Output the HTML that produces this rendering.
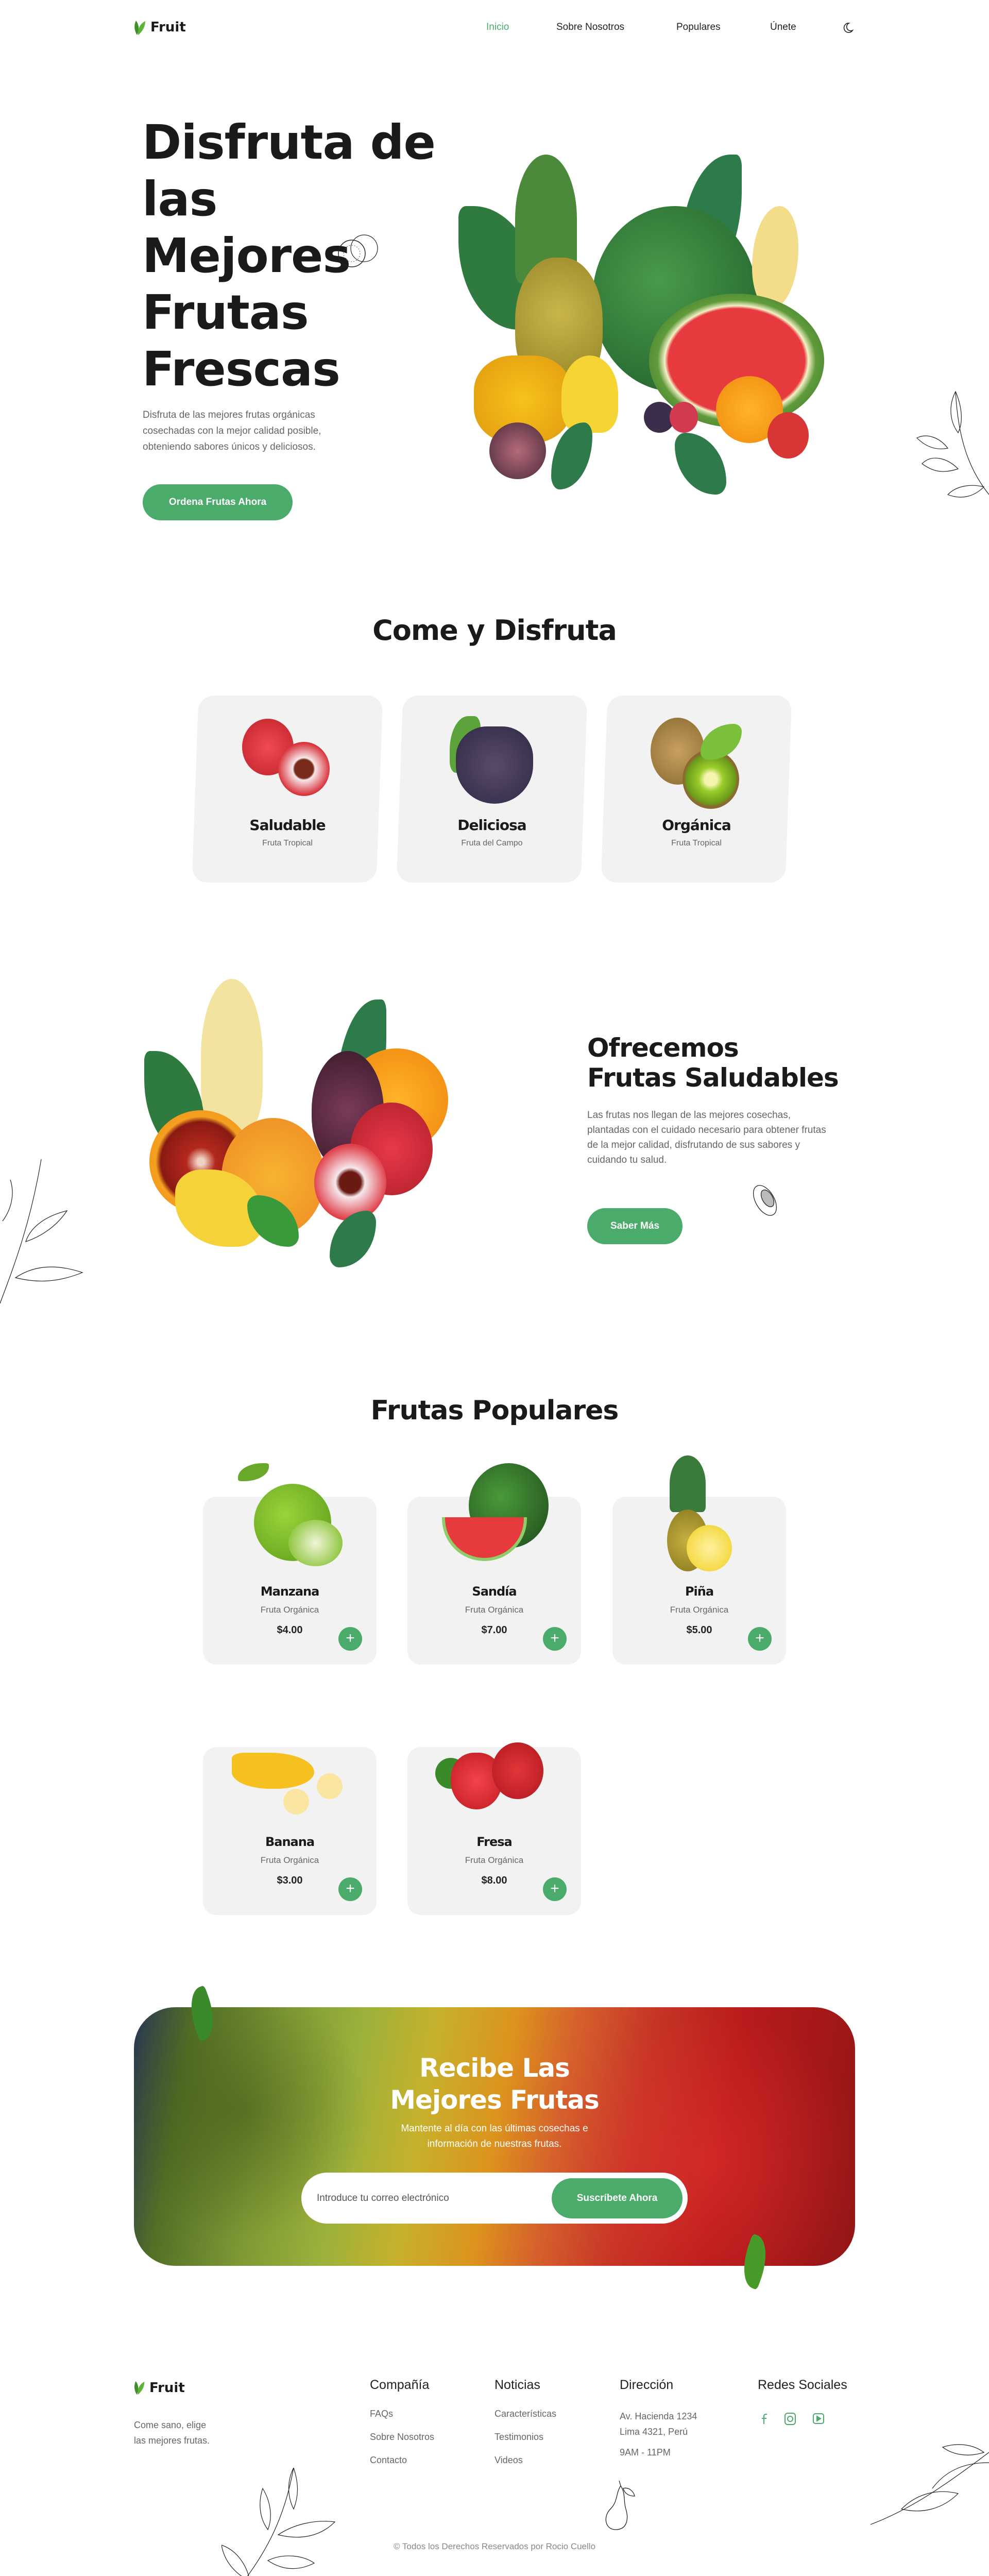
<!DOCTYPE html>
<html style="width:1920px;height:5017px;overflow:hidden"><head><meta charset="utf-8">
<style>
*{margin:0;padding:0;box-sizing:border-box}
body{width:1920px;height:5017px;position:relative;background:#fff;font-family:"Liberation Sans",sans-serif;color:#1f1f1f;overflow:hidden}
.a{position:absolute}
.h{font-family:"DejaVu Sans","Liberation Sans",sans-serif;font-weight:bold;color:#1a1a1a;letter-spacing:-1px}
.nav a{position:absolute;top:42px;font-size:19px;color:#222;text-decoration:none}
.btn{position:absolute;background:#4aab6a;color:#fff;border-radius:40px;font-weight:bold;font-size:19px;display:flex;align-items:center;justify-content:center}
.blob{position:absolute;border-radius:50%}
.card{position:absolute;background:#f2f2f2;border-radius:30px}
.pc{position:absolute;background:#f2f2f2;border-radius:26px;width:337px;height:326px}
.pc .n{position:absolute;top:170px;width:100%;text-align:center;font-size:24px}
.pc .s{position:absolute;top:210px;width:100%;text-align:center;font-size:17px;color:#666}
.pc .p{position:absolute;top:248px;width:100%;text-align:center;font-size:20px;font-weight:bold;color:#222}
.pc .plus{position:absolute;left:263px;top:253px;width:46px;height:46px;border-radius:50%;background:#4aab6a;color:#fff;font-size:30px;line-height:44px;text-align:center}
.ft{position:absolute;font-size:18px;color:#666}
.fh{position:absolute;font-size:25px;color:#222;top:4615px}
</style></head><body>

<!-- NAV -->
<svg class="a" style="left:258px;top:38px" width="30" height="32" viewBox="0 0 30 32"><path d="M8 30 C2 20 2 10 6 2 C12 10 13 20 8 30Z" fill="#3f8f2a"/><path d="M10 30 C18 24 24 14 24 3 C14 8 9 18 10 30Z" fill="#5cb535"/></svg>
<div class="a h" style="left:292px;top:38px;font-size:26px;letter-spacing:0">Fruit</div>
<div class="nav">
<a style="left:944px;color:#4aab6a">Inicio</a>
<a style="left:1080px">Sobre Nosotros</a>
<a style="left:1313px">Populares</a>
<a style="left:1495px">Únete</a>
</div>
<svg class="a" style="left:1636px;top:42px" width="22" height="24" viewBox="0 0 22 24"><path d="M12 3 A9 9 0 1 0 19 17 A7 7 0 1 1 12 3Z" fill="none" stroke="#222" stroke-width="1.6"/></svg>

<!-- HERO -->
<div class="a h" style="left:276px;top:222px;font-size:92px;line-height:110px;width:640px">Disfruta de<br>las<br>Mejores<br>Frutas<br>Frescas</div>
<svg class="a" style="left:655px;top:442px" width="90" height="90" viewBox="0 0 90 90"><circle cx="28" cy="50" r="26" fill="none" stroke="#222" stroke-width="1.5"/><circle cx="52" cy="40" r="26" fill="none" stroke="#222" stroke-width="1.2"/><circle cx="28" cy="50" r="16" fill="none" stroke="#555" stroke-dasharray="2 3"/></svg>
<div class="a" style="left:277px;top:790px;font-size:19px;line-height:31px;color:#666;width:420px">Disfruta de las mejores frutas orgánicas cosechadas con la mejor calidad posible, obteniendo sabores únicos y deliciosos.</div>
<div class="btn" style="left:277px;top:940px;width:291px;height:70px">Ordena Frutas Ahora</div>

<!-- hero fruits -->
<div class="a" style="left:890px;top:280px;width:760px;height:680px">
 <div class="blob" style="left:0;top:120px;width:160px;height:240px;background:#2f7a3e;border-radius:10% 90% 20% 80%"></div>
 <div class="blob" style="left:430px;top:20px;width:120px;height:250px;background:#2d7a4a;border-radius:90% 10% 80% 20%"></div>
 <div class="blob" style="left:110px;top:20px;width:120px;height:250px;background:#4b8a3a;border-radius:50% 50% 10% 10%"></div>
 <div class="blob" style="left:260px;top:120px;width:320px;height:360px;background:radial-gradient(circle at 40% 40%,#4a9a4a,#1e5d2a)"></div>
 <div class="blob" style="left:110px;top:220px;width:170px;height:270px;background:radial-gradient(circle at 50% 40%,#c9b64a,#8a7a20);border-radius:45%"></div>
 <div class="blob" style="left:570px;top:120px;width:90px;height:200px;background:#f3dc8a;border-radius:60% 40%"></div>
 <div class="blob" style="left:370px;top:290px;width:340px;height:260px;background:radial-gradient(ellipse,#e63a3e 0 55%,#f3f0c6 58%,#5f9a3a 64%,#2f6a2a)"></div>
 <div class="blob" style="left:30px;top:410px;width:190px;height:170px;background:radial-gradient(circle,#f7c21a,#e09a10);border-radius:40%"></div>
 <div class="blob" style="left:200px;top:410px;width:110px;height:150px;background:#f5d534;border-radius:50% 50% 30% 30%"></div>
 <div class="blob" style="left:500px;top:450px;width:130px;height:130px;background:radial-gradient(circle,#ffb42a,#f08a10)"></div>
 <div class="blob" style="left:600px;top:520px;width:80px;height:90px;background:#d83636"></div>
 <div class="blob" style="left:60px;top:540px;width:110px;height:110px;background:radial-gradient(circle,#b56a7a,#4a2a3a)"></div>
 <div class="blob" style="left:360px;top:500px;width:60px;height:60px;background:#3a2e4a"></div>
 <div class="blob" style="left:410px;top:500px;width:55px;height:60px;background:#d23a52"></div>
 <div class="blob" style="left:180px;top:540px;width:80px;height:130px;background:#2f7a4a;border-radius:80% 20%"></div>
 <div class="blob" style="left:420px;top:560px;width:100px;height:120px;background:#2f7a4a;border-radius:20% 80%"></div>
</div>
<svg class="a" style="left:1770px;top:740px" width="150" height="230" viewBox="0 0 150 230" fill="none" stroke="#222" stroke-width="1.2"><path d="M150 220 C110 170 90 110 85 20"/><path d="M85 20 C70 50 75 80 90 100 C100 80 98 50 85 20Z"/><path d="M20 160 C40 140 70 150 90 170 C60 180 40 175 20 160Z"/><path d="M10 110 C30 100 55 110 70 130 C45 135 25 125 10 110Z"/><path d="M70 220 C90 200 120 200 140 205 C120 225 95 230 70 220Z"/></svg>

<!-- COME Y DISFRUTA -->
<div class="a h" style="left:0;width:1920px;text-align:center;top:1192px;font-size:54px">Come y Disfruta</div>
<div class="card" style="left:379px;top:1350px;width:358px;height:363px;transform:skewX(-2deg)"></div>
<div class="card" style="left:776px;top:1350px;width:358px;height:363px;transform:skewX(-2deg)"></div>
<div class="card" style="left:1173px;top:1350px;width:358px;height:363px;transform:skewX(-2deg)"></div>
<div class="blob" style="left:470px;top:1395px;width:100px;height:110px;background:radial-gradient(circle,#f04a52,#c0222a)"></div>
<div class="blob" style="left:540px;top:1440px;width:100px;height:105px;background:radial-gradient(circle,#7a2a1a 0 25%,#f5e8ea 30%,#d9323a 70%)"></div>
<div class="blob" style="left:873px;top:1390px;width:60px;height:110px;background:#5ba33a;border-radius:60% 20%"></div>
<div class="blob" style="left:885px;top:1410px;width:150px;height:150px;background:radial-gradient(circle,#5a4a6a,#2e2a44);border-radius:40% 40% 50% 50%"></div>
<div class="blob" style="left:1263px;top:1393px;width:105px;height:130px;background:radial-gradient(circle,#c8a060,#8a6a30)"></div>
<div class="blob" style="left:1325px;top:1455px;width:110px;height:115px;background:radial-gradient(circle,#f6f5b0 0 15%,#9acc2a 30%,#6a9a1a 60%,#8a6a30 66%)"></div>
<div class="blob" style="left:1360px;top:1405px;width:80px;height:70px;background:#7ac03a;border-radius:80% 20%"></div>
<div class="a h" style="left:379px;width:358px;text-align:center;top:1585px;font-size:28px">Saludable</div>
<div class="a" style="left:379px;width:358px;text-align:center;top:1628px;font-size:16px;color:#666">Fruta Tropical</div>
<div class="a h" style="left:776px;width:358px;text-align:center;top:1585px;font-size:28px">Deliciosa</div>
<div class="a" style="left:776px;width:358px;text-align:center;top:1628px;font-size:16px;color:#666">Fruta del Campo</div>
<div class="a h" style="left:1173px;width:358px;text-align:center;top:1585px;font-size:28px">Orgánica</div>
<div class="a" style="left:1173px;width:358px;text-align:center;top:1628px;font-size:16px;color:#666">Fruta Tropical</div>

<!-- ABOUT -->
<div class="a" style="left:280px;top:1890px;width:760px;height:540px">
 <div class="blob" style="left:0;top:150px;width:120px;height:200px;background:#2f7a3e;border-radius:10% 90% 20% 80%"></div>
 <div class="blob" style="left:370px;top:50px;width:100px;height:260px;background:#2d7a4a;border-radius:90% 10% 80% 20%"></div>
 <div class="blob" style="left:110px;top:10px;width:120px;height:300px;background:#f3e3a0;border-radius:50% 50% 30% 30%"></div>
 <div class="blob" style="left:390px;top:145px;width:200px;height:200px;background:radial-gradient(circle,#ffb32a,#f0860e)"></div>
 <div class="blob" style="left:325px;top:150px;width:140px;height:230px;background:radial-gradient(circle,#7a3a5a,#3a1a2a);border-radius:50% 50% 45% 45%"></div>
 <div class="blob" style="left:10px;top:265px;width:200px;height:200px;background:radial-gradient(circle,#f0d0c0 0 5%,#b3281e 20%,#8a1a12 55%,#f5a020 62%,#f08a10)"></div>
 <div class="blob" style="left:150px;top:280px;width:200px;height:230px;background:radial-gradient(circle,#f7b430,#ee8a24)"></div>
 <div class="blob" style="left:60px;top:380px;width:170px;height:150px;background:#f6d23a;border-radius:30% 60%"></div>
 <div class="blob" style="left:400px;top:250px;width:160px;height:180px;background:radial-gradient(circle,#e8384a,#b0202a)"></div>
 <div class="blob" style="left:330px;top:330px;width:140px;height:150px;background:radial-gradient(circle,#6a1a12 0 20%,#f5e8ec 28%,#e0404a 70%)"></div>
 <div class="blob" style="left:200px;top:430px;width:100px;height:100px;background:#3a9a3a;border-radius:20% 80%"></div>
 <div class="blob" style="left:360px;top:460px;width:90px;height:110px;background:#2f7a4a;border-radius:80% 20%"></div>
</div>
<div class="a h" style="left:1140px;top:2005px;font-size:50px;line-height:58px">Ofrecemos<br>Frutas Saludables</div>
<div class="a" style="left:1140px;top:2150px;font-size:19px;line-height:29px;color:#666;width:470px">Las frutas nos llegan de las mejores cosechas, plantadas con el cuidado necesario para obtener frutas de la mejor calidad, disfrutando de sus sabores y cuidando tu salud.</div>
<div class="btn" style="left:1140px;top:2345px;width:185px;height:70px">Saber Más</div>
<svg class="a" style="left:1450px;top:2290px" width="80" height="80" viewBox="0 0 80 80" fill="none" stroke="#222" stroke-width="1.3"><ellipse cx="35" cy="40" rx="18" ry="32" transform="rotate(-30 35 40)"/><ellipse cx="40" cy="36" rx="10" ry="18" transform="rotate(-30 40 36)" fill="#bbb"/></svg>
<svg class="a" style="left:0;top:2250px" width="170" height="290" viewBox="0 0 170 290" fill="none" stroke="#222" stroke-width="1.2"><path d="M0 280 C30 200 60 120 80 0"/><path d="M30 230 C60 210 100 200 160 220 C110 240 70 240 30 230Z"/><path d="M50 160 C60 130 90 110 130 100 C110 130 80 150 50 160Z"/><path d="M5 120 C20 100 30 70 20 40"/></svg>

<!-- POPULARES -->
<div class="a h" style="left:0;width:1920px;text-align:center;top:2708px;font-size:52px">Frutas Populares</div>
<div class="pc" style="left:394px;top:2905px"><div class="n h">Manzana</div><div class="s">Fruta Orgánica</div><div class="p">$4.00</div><div class="plus">+</div></div>
<div class="pc" style="left:791px;top:2905px"><div class="n h">Sandía</div><div class="s">Fruta Orgánica</div><div class="p">$7.00</div><div class="plus">+</div></div>
<div class="pc" style="left:1189px;top:2905px"><div class="n h">Piña</div><div class="s">Fruta Orgánica</div><div class="p">$5.00</div><div class="plus">+</div></div>
<div class="pc" style="left:394px;top:3391px"><div class="n h">Banana</div><div class="s">Fruta Orgánica</div><div class="p">$3.00</div><div class="plus">+</div></div>
<div class="pc" style="left:791px;top:3391px"><div class="n h">Fresa</div><div class="s">Fruta Orgánica</div><div class="p">$8.00</div><div class="plus">+</div></div>
<div class="blob" style="left:462px;top:2840px;width:60px;height:35px;background:#6aa82a;border-radius:80% 10%"></div>
<div class="blob" style="left:493px;top:2880px;width:150px;height:150px;background:radial-gradient(circle at 40% 40%,#9ad43a,#5a9a1a)"></div>
<div class="blob" style="left:560px;top:2950px;width:105px;height:90px;background:radial-gradient(circle,#f0f5d8,#8cc43a 80%)"></div>
<div class="blob" style="left:910px;top:2840px;width:155px;height:165px;background:radial-gradient(circle at 40% 40%,#4a9a3a,#1e4a1a)"></div>
<div class="a" style="left:858px;top:2945px;width:165px;height:85px;background:#e63a3e;border-radius:0 0 90px 90px;border:6px solid #8fcc6a;border-top:none"></div>
<div class="blob" style="left:1300px;top:2825px;width:70px;height:110px;background:#3a7a3a;border-radius:50% 50% 10% 10%"></div>
<div class="blob" style="left:1295px;top:2930px;width:80px;height:120px;background:radial-gradient(circle,#c8b040,#8a7a20)"></div>
<div class="blob" style="left:1333px;top:2960px;width:88px;height:90px;background:radial-gradient(circle,#fff1a0,#f0d020)"></div>
<div class="a" style="left:450px;top:3382px;width:220px;height:140px;overflow:hidden"><div class="blob" style="left:0;top:20px;width:160px;height:70px;background:#f6c020;border-radius:20% 70% 60% 60%"></div><div class="blob" style="left:100px;top:90px;width:50px;height:50px;background:#fae6a0"></div><div class="blob" style="left:165px;top:60px;width:50px;height:50px;background:#fae6a0"></div></div>
<div class="a" style="left:845px;top:3382px;width:240px;height:130px;overflow:hidden"><div class="blob" style="left:0;top:30px;width:60px;height:60px;background:#3a8a2a"></div><div class="blob" style="left:30px;top:20px;width:100px;height:110px;background:radial-gradient(circle,#f2444a,#c21a22);border-radius:45% 45% 50% 50%"></div><div class="blob" style="left:110px;top:0;width:100px;height:110px;background:radial-gradient(circle,#e2363a,#b0181e)"></div></div>

<!-- NEWSLETTER -->
<div class="a" style="left:260px;top:3896px;width:1400px;height:502px;border-radius:80px;overflow:hidden;background:linear-gradient(100deg,#2a3a5a 0%,#5a7a2a 8%,#8aa83a 20%,#a8c040 30%,#d8c030 40%,#f0a020 50%,#e86a30 58%,#d83a2a 68%,#c81e1e 80%,#a01818 100%)">
 <div class="a" style="left:0;top:0;width:100%;height:100%;background:radial-gradient(circle at 15% 40%,rgba(60,80,20,.5),transparent 20%),radial-gradient(circle at 80% 60%,rgba(255,60,60,.35),transparent 25%),rgba(0,0,0,.08)"></div>
</div>
<div class="blob" style="left:370px;top:3858px;width:45px;height:100px;background:#3a8a2a;border-radius:80% 10%;transform:rotate(-20deg)"></div>
<div class="blob" style="left:1443px;top:4340px;width:45px;height:100px;background:#4a9a2a;border-radius:10% 80%;transform:rotate(20deg)"></div>
<div class="a h" style="left:0;width:1920px;text-align:center;top:3983px;font-size:50px;line-height:62px;color:#fff">Recibe Las<br>Mejores Frutas</div>
<div class="a" style="left:0;width:1920px;text-align:center;top:4117px;font-size:19px;line-height:30px;color:#fff">Mantente al día con las últimas cosechas e<br>información de nuestras frutas.</div>
<div class="a" style="left:585px;top:4217px;width:750px;height:99px;background:#fff;border-radius:50px"></div>
<div class="a" style="left:615px;top:4256px;font-size:19px;color:#555">Introduce tu correo electrónico</div>
<div class="btn" style="left:1071px;top:4228px;width:254px;height:78px">Suscríbete Ahora</div>

<!-- FOOTER -->
<svg class="a" style="left:258px;top:4620px" width="28" height="30" viewBox="0 0 30 32"><path d="M8 30 C2 20 2 10 6 2 C12 10 13 20 8 30Z" fill="#3f8f2a"/><path d="M10 30 C18 24 24 14 24 3 C14 8 9 18 10 30Z" fill="#5cb535"/></svg>
<div class="a h" style="left:290px;top:4620px;font-size:26px;letter-spacing:0">Fruit</div>
<div class="ft" style="left:260px;top:4692px;line-height:30px">Come sano, elige<br>las mejores frutas.</div>
<div class="fh" style="left:718px">Compañía</div>
<div class="fh" style="left:960px">Noticias</div>
<div class="fh" style="left:1203px">Dirección</div>
<div class="fh" style="left:1471px">Redes Sociales</div>
<div class="ft" style="left:718px;top:4675px">FAQs</div>
<div class="ft" style="left:718px;top:4720px">Sobre Nosotros</div>
<div class="ft" style="left:718px;top:4765px">Contacto</div>
<div class="ft" style="left:960px;top:4675px">Características</div>
<div class="ft" style="left:960px;top:4720px">Testimonios</div>
<div class="ft" style="left:960px;top:4765px">Videos</div>
<div class="ft" style="left:1203px;top:4675px;line-height:30px">Av. Hacienda 1234<br>Lima 4321, Perú</div>
<div class="ft" style="left:1203px;top:4750px">9AM - 11PM</div>
<svg class="a" style="left:1468px;top:4680px" width="140" height="30" viewBox="0 0 140 30" fill="none" stroke="#4aab6a" stroke-width="2"><path d="M15 25 V10 Q15 6 19 6 H21 M11 14 H20"/><rect x="56" y="4" width="20" height="22" rx="5"/><circle cx="66" cy="15" r="5"/><rect x="111" y="5" width="20" height="19" rx="4"/><path d="M118 10 L125 14.5 L118 19Z" fill="#4aab6a"/></svg>
<div class="a" style="left:0;width:1920px;text-align:center;top:4933px;font-size:17px;color:#888">© Todos los Derechos Reservados por Rocio Cuello</div>
<svg class="a" style="left:430px;top:4790px" width="230" height="225" viewBox="0 0 230 225" fill="none" stroke="#222" stroke-width="1.2"><path d="M40 225 C80 170 120 110 140 0"/><path d="M140 0 C125 30 130 60 140 80 C150 55 150 30 140 0Z"/><path d="M80 40 C70 70 75 100 90 120 C100 95 95 65 80 40Z"/><path d="M110 130 C140 110 180 100 220 105 C190 135 150 140 110 130Z"/><path d="M0 150 C30 160 50 190 55 220 C25 205 5 180 0 150Z"/><path d="M90 180 C120 165 160 170 180 185 C150 200 120 200 90 180Z"/></svg>
<svg class="a" style="left:1160px;top:4815px" width="85" height="100" viewBox="0 0 85 100" fill="none" stroke="#222" stroke-width="1.3"><path d="M45 10 C35 25 40 40 25 55 C10 70 15 95 35 95 C60 95 60 70 55 55 C50 40 55 25 45 10Z"/><path d="M45 10 L42 0"/><path d="M50 15 C60 12 70 20 72 30 C62 30 52 25 50 15Z"/></svg>
<svg class="a" style="left:1690px;top:4720px" width="230" height="190" viewBox="0 0 230 190" fill="none" stroke="#222" stroke-width="1.2"><path d="M0 180 C80 150 150 100 230 40"/><path d="M60 150 C90 120 130 110 170 120 C140 150 100 160 60 150Z"/><path d="M120 110 C150 70 190 60 230 60"/><path d="M140 30 C170 20 200 25 220 40 C190 50 160 45 140 30Z"/></svg>
</body></html>
